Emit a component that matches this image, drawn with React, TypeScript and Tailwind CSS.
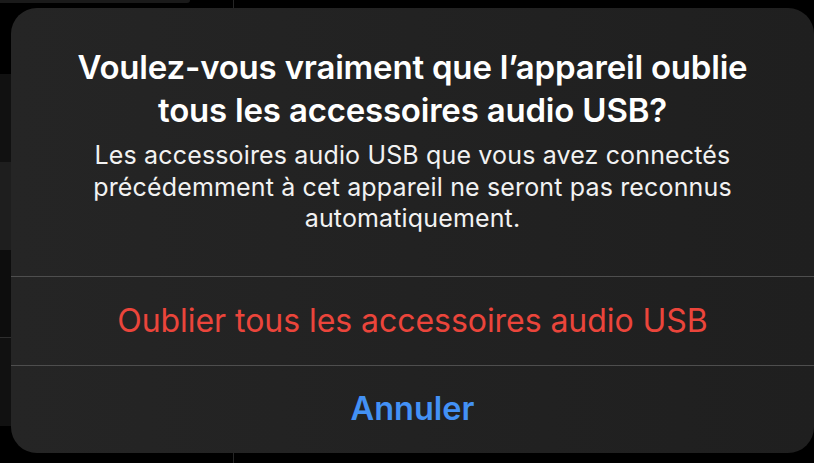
const font = { fontFamily: 'Inter, "Noto Sans", sans-serif' };

function Backdrop() {
  return (
    <div className="flex h-full w-full flex-col bg-black">
      <div className="relative flex h-[8px] shrink-0">
        <div className="h-[3px] w-[190px] rounded-br-[12px] bg-[#1a1a1a]" />
        <div className="ml-[43px] h-full w-px bg-[#262626]" />
      </div>
      <div className="h-[66px] shrink-0" />
      <div className="h-[88px] shrink-0 bg-[#111111]" />
      <div className="h-[88px] shrink-0 bg-[#1e1e1e]" />
      <div className="h-[87px] shrink-0 bg-[#0d0d0d]" />
      <div className="h-px shrink-0 bg-[#2e2e2e]" />
      <div className="h-[88px] shrink-0 bg-[#111111]" />
      <div className="flex flex-1 items-end pl-[233px]">
        <div className="h-[10px] w-px bg-[#262626]" />
      </div>
    </div>
  );
}

export default function App() {
  return (
    <div className="relative h-[463px] w-[814px] overflow-hidden bg-black" style={font}>
      <Backdrop />
      <div className="absolute left-[11px] top-[8px] flex h-[445px] w-[803px] flex-col overflow-hidden rounded-[26px] bg-gradient-to-r from-[#252525] to-[#1f1f1f]">
        <div className="flex h-[268px] flex-col items-center px-4 pt-[38px] text-center">
          <h1 className="whitespace-nowrap text-[33px] font-semibold leading-[43px] tracking-[-0.2px] text-white">
            Voulez-vous vraiment que l’appareil oublie
            <br />
            tous les accessoires audio USB?
          </h1>
          <p className="mt-[8px] whitespace-nowrap text-[25px] leading-[31.5px] tracking-[0.15px] text-[#f2f2f2]">
            Les accessoires audio USB que vous avez connectés
            <br />
            précédemment à cet appareil ne seront pas reconnus
            <br />
            automatiquement.
          </p>
        </div>
        <div className="h-px bg-[#4e4e4e]" />
        <button className="flex h-[88px] items-center justify-center whitespace-nowrap text-[32px] tracking-[-0.05px] text-[#eb453b]">
          Oublier tous les accessoires audio USB
        </button>
        <div className="h-px bg-[#4e4e4e]" />
        <button className="flex flex-1 items-center justify-center text-[32.5px] font-semibold text-[#4391f5]">
          Annuler
        </button>
      </div>
    </div>
  );
}
